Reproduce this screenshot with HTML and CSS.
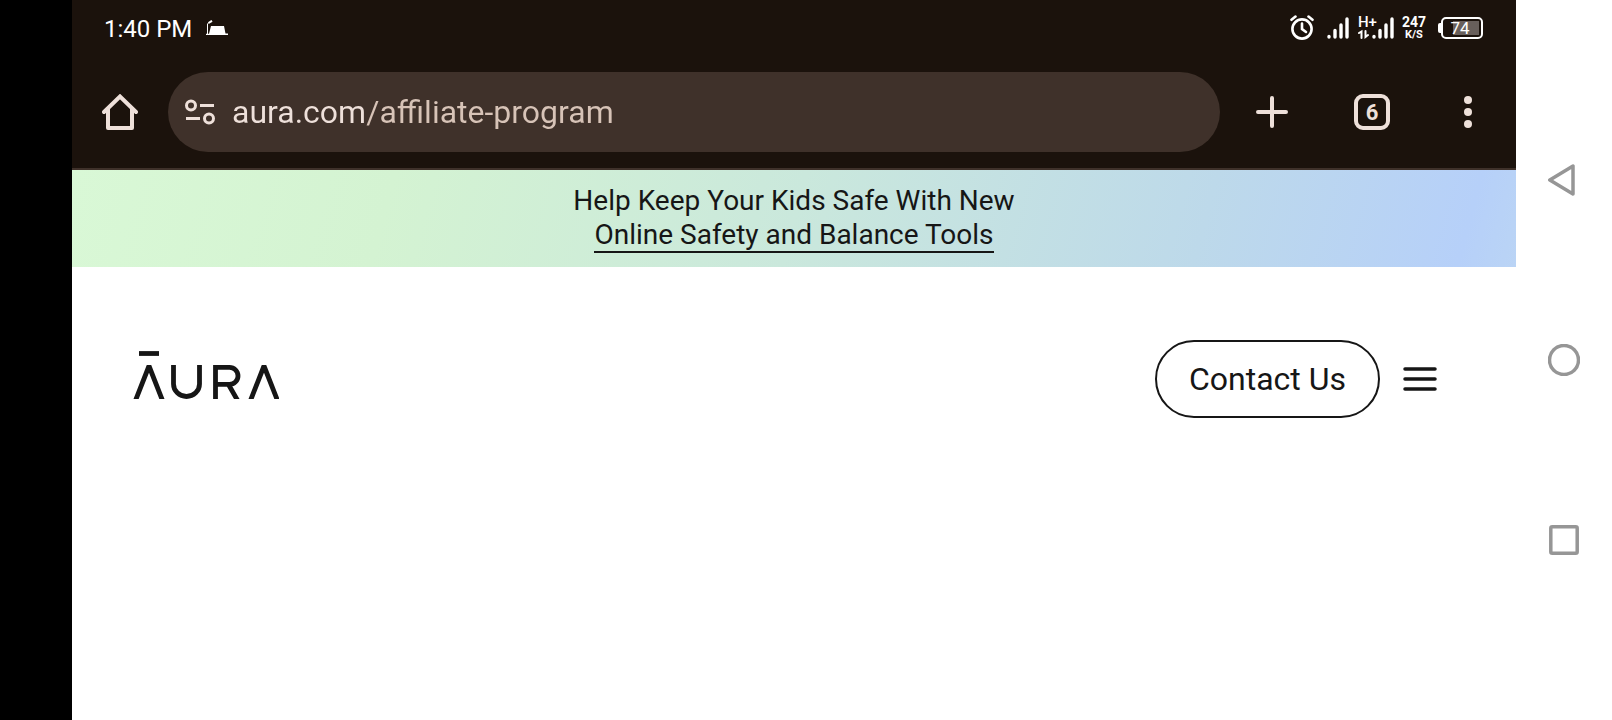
FILE: index.html
```html
<!DOCTYPE html>
<html lang="en">
<head>
<meta charset="UTF-8" />
<meta name="viewport" content="width=device-width, initial-scale=1" />
<title>Aura Affiliate Program</title>
<link rel="stylesheet" href="styles.css">
</head>
<body>

<div class="screen">
  <div class="status-bar">
    <span class="time">1:40 PM</span>
    <svg class="app-icon" width="22" height="16" viewBox="0 0 22 16" fill="#fff">
      <path d="M5 6h13l1.500 7.500H22V15H0v-1.200h3z"/>
      <path d="M1.500 14V4L3 2.500" fill="none" stroke="#fff" stroke-width="1"/>
      <path d="M2.500 3L6 0.800" stroke="#fff" stroke-width="2"/>
    </svg>

    <div class="status-icons">
      <svg class="alarm" width="24" height="26" viewBox="0 0 24 26" fill="none" stroke="#fff" stroke-width="2.600" stroke-linecap="round">
        <circle cx="12" cy="14" r="9.600"/>
        <path d="M12 8.500V14l4 3"/>
        <path d="M1.500 4.800L5.500 1.600M22.500 4.800L18.500 1.600"/>
      </svg>
      <svg class="signal" width="22" height="24" viewBox="0 0 22 24" stroke="#fff" stroke-width="3.400" stroke-linecap="round">
        <path d="M2 20.500v0.500M8 14.500v6.500M14 9v12M20 3v18"/>
      </svg>
      <div class="mobile">
        <span class="net-type">H+</span>
        <svg width="36" height="24" viewBox="0 0 36 24" stroke="#fff" stroke-width="3.400" stroke-linecap="round">
          <path d="M16 20.500v0.500M22 14.500v6.500M28 9v12M34 3v18"/>
          <path d="M1 17l2.500-1.500V22M7.500 15v6l2.500-2" fill="none" stroke-width="2"/>
        </svg>
      </div>
      <div class="speed"><span>247</span><small>K/S</small></div>
      <div class="battery"><span class="battery-box">74</span></div>
    </div>
  </div>

  <div class="toolbar">
    <button class="tool home" aria-label="Home">
      <svg width="36" height="36" viewBox="0 0 36 36" fill="none" stroke="#eee0da" stroke-width="4" stroke-linejoin="round" stroke-linecap="round">
        <path d="M2 18L18 2.500L34 18" stroke-linejoin="miter"/>
        <path d="M6 15v19h24V15"/>
      </svg>
    </button>
    <div class="address">
      <svg width="30" height="26" viewBox="0 0 30 26" fill="none" stroke="#eee0da" stroke-width="3">
        <circle cx="6" cy="6.500" r="4.500"/>
        <path d="M15 6.500h14M1 19.500h14"/>
        <circle cx="24" cy="19.500" r="4.500"/>
      </svg>
      <input class="url" type="text" value="aura.com/affiliate-program" aria-label="Address">
    </div>
    <button class="tool" aria-label="New tab">
      <svg width="32" height="32" viewBox="0 0 32 32" stroke="#eee0da" stroke-width="4" stroke-linecap="round">
        <path d="M16 2v28M2 16h28"/>
      </svg>
    </button>
    <button class="tool tabs" aria-label="Open tabs"><span>6</span></button>
    <button class="tool" aria-label="Menu">
      <svg width="8" height="32" viewBox="0 0 8 32" fill="#eee0da">
        <circle cx="4" cy="4" r="4"/><circle cx="4" cy="16" r="4"/><circle cx="4" cy="28" r="4"/>
      </svg>
    </button>
  </div>

  <div class="banner">
    <p>Help Keep Your Kids Safe With New</p>
    <a href="#">Online Safety and Balance Tools</a>
  </div>

  <header class="site-header">
    <a href="#" class="logo" aria-label="Aura">
      <svg width="146" height="49" viewBox="0 0 146 49" fill="none" stroke="#161616" stroke-width="4.800">
        <path d="M6 3.500h20"/>
        <path d="M1.900 52L16 16L30.100 52M116.900 52L131 16L145.100 52" stroke-linejoin="bevel"/>
        <path d="M40.500 15v19a13 12.500 0 0 0 26 0v-19"/>
        <path d="M82.500 49V17.400h14a8.500 8.500 0 0 1 0 17H83M95.500 34.500L105.500 52"/>
      </svg>
    </a>
    <div class="actions">
      <button class="contact">Contact Us</button>
      <button class="menu" aria-label="Open menu">
        <svg width="34" height="24" viewBox="0 0 34 24" stroke="#161616" stroke-width="3.500" stroke-linecap="round">
          <path d="M2 2h30M2 12h30M2 22h30"/>
        </svg>
      </button>
    </div>
  </header>
</div>

<nav class="system-nav">
  <button aria-label="Back">
    <svg width="32" height="32" viewBox="0 0 32 32"><path d="M1.800 16L25 2V30z"/></svg>
  </button>
  <button aria-label="Home screen">
    <svg width="32" height="32" viewBox="0 0 32 32"><circle cx="16" cy="16" r="14.500"/></svg>
  </button>
  <button aria-label="Recent apps">
    <svg width="32" height="32" viewBox="0 0 32 32"><rect x="2.800" y="2.800" width="26.400" height="26.400" rx="1.500"/></svg>
  </button>
</nav>

</body>
</html>
```
FILE: styles.css
```css
* { box-sizing: border-box; }
body { margin: 0; min-height: 100vh; display: flex; padding-left: 72px; background: #000; font-family: Roboto, "Liberation Sans", sans-serif; }
svg { display: block; }
p { margin: 0; }
button { border: none; background: none; padding: 0; font-family: inherit; cursor: pointer; }

.screen { flex: 1; background: #fff; }

.status-bar { display: flex; align-items: center; height: 56px; padding: 0 33px 0 32px; background: #1b120c; color: #fff; }
.time { margin-top: 2px; font-size: 24px; line-height: 28px; }
.app-icon { margin-left: 14px; }
.status-icons { margin-left: auto; display: flex; align-items: center; }
.signal { margin-left: 13px; }
.mobile { position: relative; margin-left: 9px; }
.net-type { position: absolute; top: -1px; left: 0; font-size: 15px; line-height: 15px; font-weight: 500; }
.speed { margin-left: 8px; display: flex; flex-direction: column; align-items: center; font-weight: 700; font-size: 14px; line-height: 13px; }
.speed small { font-size: 11px; line-height: 11px; }
.battery { display: flex; align-items: center; margin-left: 12px; }
.battery::before { content: ""; width: 3px; height: 10px; border-radius: 2px 0 0 2px; background: #fff; }
.battery-box { width: 42px; height: 22px; border: 2px solid #fff; border-radius: 5px; padding-right: 4px; font-size: 17px; line-height: 19px; text-align: center; background: linear-gradient(#685f5b, #685f5b) right 2px center / 26px 14px no-repeat; }

.toolbar { display: flex; align-items: center; height: 114px; padding-left: 24px; background: #1b120c; border-bottom: 2px solid #3f312a; }
.tool { flex: none; display: flex; align-items: center; justify-content: center; width: 96px; height: 96px; }
.tool.home { width: 48px; margin-right: 24px; }
.address { flex: 1; display: flex; align-items: center; height: 80px; padding: 0 17px; margin-right: 4px; border-radius: 40px; background: #3f312a; }
/* domain part is lighter than the path */
.url { flex: 1; min-width: 0; margin-left: 17px; padding: 0; border: none; outline: none; font-family: inherit; font-size: 32px; line-height: 40px; color: transparent; background: linear-gradient(90deg, #eee0da 132px, #d7c3b7 132px); -webkit-background-clip: text; background-clip: text; }
.tabs { margin-left: 4px; }
.tabs span { width: 36px; height: 36px; border: 4px solid #eee0da; border-radius: 9px; color: #eee0da; font-size: 22px; line-height: 29px; font-weight: 700; }

.banner { display: flex; flex-direction: column; align-items: center; padding: 14px 20px; color: #161616; font-size: 28px; line-height: 34px; background: linear-gradient(105deg, #d9f8d6 0%, #d4f3d2 22%, #cae8dc 50%, #bdd9ea 78%, #b6d0f9 96%, #bad4f5 100%); }
.banner a { color: inherit; text-decoration: none; line-height: 33px; border-bottom: 2px solid #161616; }

.site-header { display: flex; align-items: flex-start; justify-content: space-between; padding: 73px 79px 0 61px; }
.logo { margin-top: 10px; }
.actions { display: flex; align-items: center; gap: 23px; }
.contact { height: 78px; padding: 0 32px; border: 2px solid #161616; border-radius: 39px; color: #161616; font-size: 32px; line-height: 36px; }

.system-nav { flex: none; width: 96px; display: grid; grid-template-rows: repeat(3, 1fr); justify-items: center; align-items: center; padding: 90px 0; background: #fff; }
.system-nav svg { fill: none; stroke: #969696; stroke-width: 3.5; stroke-linejoin: round; }
```
